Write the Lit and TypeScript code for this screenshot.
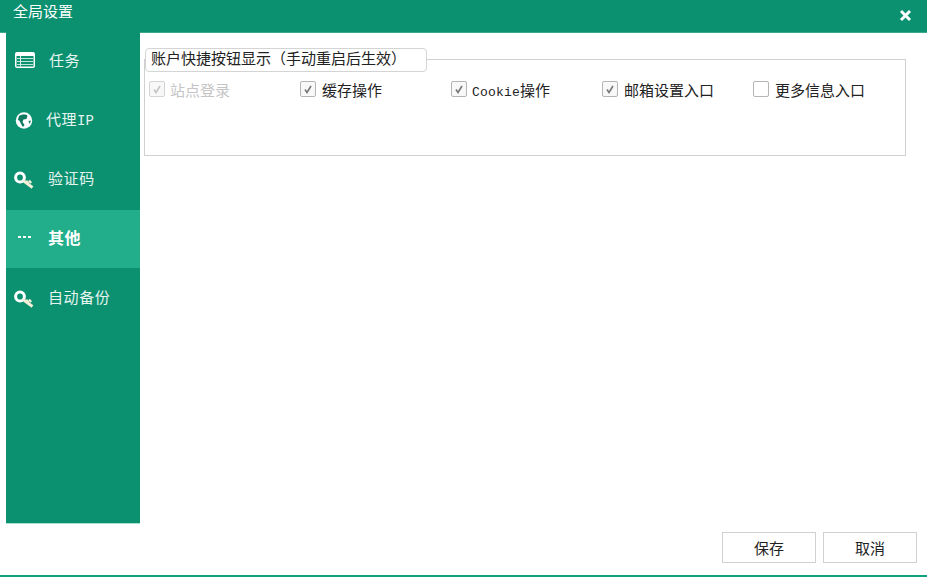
import { LitElement, html, css } from "lit";
import { customElement } from "lit/decorators.js";

const keyIcon = html`<svg class="ic key" width="20" height="18" viewBox="0 0 20 18">
  <ellipse cx="6" cy="6.5" rx="4.4" ry="4.6" fill="none" stroke="#fff" stroke-width="3"/>
  <path d="M9 9.5 L18.5 16.5" stroke="#f3f0d8" stroke-width="2.8" fill="none"/>
  <path d="M15 9.5 L17.2 12 M12.2 9.8 L14.4 12.6" stroke="#f3f0d8" stroke-width="2.2" fill="none"/>
</svg>`;

const check = html`<svg width="12" height="12" viewBox="0 0 12 12"><path d="M3 6.5 L5 9.5 L9 3" fill="none" stroke="currentColor" stroke-width="1.6"/></svg>`;

@customElement("app-root")
export class AppRoot extends LitElement {
  static styles = css`
    :host {
      display: flex;
      flex-direction: column;
      width: 927px;
      height: 577px;
      background: #fff;
      font-family: "Noto Sans CJK SC", "Liberation Sans", sans-serif;
      font-size: 15px;
      color: #222;
      overflow: hidden;
    }
    .title {
      height: 32px;
      flex: none;
      background: #0b9070;
      border-bottom: 1px solid #3aa88a;
      color: #fff;
      display: flex;
      justify-content: space-between;
      font-size: 15px;
      line-height: 22px;
      padding-left: 13px;
      padding-right: 15px;
    }
    .close { margin-top: 9px; }
    .body { flex: 1; display: flex; min-height: 0; padding-left: 6px; }
    .side {
      width: 134px;
      height: 491px;
      margin-top: -1px;
      background: #0b9070;
      border-bottom: 1px solid #a9e0cf;
      flex: none;
      display: flex;
      flex-direction: column;
    }
    .item {
      height: 59.25px;
      flex: none;
      box-sizing: border-box;
      display: flex;
      align-items: center;
      color: #e6f5f0;
      padding-left: 8px;
      gap: 14px;
      letter-spacing: 0.6px;
    }
    .item > span { margin-bottom: 5px; }
    .item.task { gap: 14px; padding-left: 9px; }
    .item.task .ic { margin-bottom: 3px; }
    .item.proxy { gap: 13px; padding-left: 9px; }
    .item.proxy > span { letter-spacing: 0.5px; }
    .item.active {
      background: #23ae8b;
      color: #fff;
      font-weight: 700;
      font-size: 16px;
      height: 58px;
      margin-bottom: 1.25px;
      gap: 16px;
      padding-left: 12px;
    }
    .item.active > span { margin-bottom: 3px; }
    .item.active .ic { margin-bottom: 4px; }
    .item .ic { flex: none; }
    .latin { font-family: "Liberation Mono", monospace; font-size: 13px; letter-spacing: 0.2px; }
    .item .latin { font-size: 14px; letter-spacing: 0; }
    .main { flex: 1; padding: 14px 21px 0 4px; min-width: 0; position: relative; }
    .group {
      position: relative;
      margin-top: 12px;
      height: 97px;
      box-sizing: border-box;
      border: 1px solid #d0d0d0;
      padding: 20px 0 0 4px;
      display: flex;
    }
    .legend {
      position: absolute;
      left: 0;
      top: -12px;
      width: 282px;
      height: 24px;
      box-sizing: border-box;
      background: #fff;
      border: 1px solid #d4d4d4;
      border-radius: 4px;
      padding-left: 5px;
      line-height: 18px;
      color: #222;
      white-space: nowrap;
    }
    .opt {
      width: 151px;
      flex: none;
      display: flex;
      align-items: center;
      gap: 6px;
      height: 18px;
      white-space: nowrap;
    }
    .opt.tight { gap: 5px; }
    .box {
      width: 16px;
      height: 16px;
      box-sizing: border-box;
      border: 1px solid #b5b5b5;
      border-radius: 2px;
      background: #f8f8f8;
      color: #777;
      display: flex;
      align-items: center;
      justify-content: center;
    }
    .box.off { background: #fff; }
    .opt.disabled { color: #c4c4c4; }
    .opt.disabled .box { border-color: #d4d4d4; color: #c4c4c4; }
    .footer {
      flex: none;
      height: 31px;
      display: flex;
      justify-content: flex-end;
      gap: 7px;
      padding: 0 10px 12px 0;
      margin-top: -43px;
    }
    .btn {
      width: 94px;
      height: 31px;
      box-sizing: border-box;
      border: 1px solid #d0d0d0;
      background: #fff;
      font: inherit;
      color: #222;
      padding: 0;
    }
    .bottom { flex: none; height: 2px; background: #10a07c; }
  `;

  render() {
    return html`
      <div class="title">
        <span>全局设置</span>
        <svg class="close" width="13" height="13" viewBox="0 0 13 13"><path d="M2 2 L11 11 M11 2 L2 11" stroke="#fff" stroke-width="3"/></svg>
      </div>
      <div class="body">
        <nav class="side">
          <div class="item task">
            <svg class="ic" width="20" height="16" viewBox="0 0 20 16">
              <rect x="0" y="0" width="20" height="16" rx="2" fill="#fff"/>
              <rect x="1.5" y="4" width="17" height="10.5" fill="#0b9070"/>
              <path d="M2 6.5 H18 M2 9.5 H18 M2 12.5 H18" stroke="#bfe6da" stroke-width="1.2"/>
              <path d="M5.5 4 V14.5" stroke="#d9f0e8" stroke-width="1"/>
            </svg>
            <span>任务</span>
          </div>
          <div class="item proxy">
            <svg class="ic" width="18" height="17" viewBox="0 0 17 17">
              <circle cx="8.5" cy="8.5" r="8.2" fill="#fff"/>
              <path d="M3.5 4 C6 2 10 2 12 3.5 L11 7 L8 7.5 L7 10 L9 13 L7.5 15 C6 13 5 11 4.5 9.5 L2.5 7.5 Z" fill="#0b7a60"/>
              <path d="M13 9 L15.5 8.5 L14 12 Z" fill="#0b7a60"/>
            </svg>
            <span>代理<span class="latin">IP</span></span>
          </div>
          <div class="item">${keyIcon}<span>验证码</span></div>
          <div class="item active">
            <svg class="ic" width="14" height="4" viewBox="0 0 14 4"><path d="M0 1h3v2H0z M5 1h3v2H5z M10 1h3v2h-3z" fill="#fff"/></svg>
            <span>其他</span>
          </div>
          <div class="item">${keyIcon}<span>自动备份</span></div>
        </nav>
        <main class="main">
          <section class="group">
            <div class="legend">账户快捷按钮显示（手动重启后生效）</div>
            <label class="opt disabled tight"><span class="box">${check}</span>站点登录</label>
            <label class="opt"><span class="box">${check}</span>缓存操作</label>
            <label class="opt tight"><span class="box">${check}</span><span><span class="latin">Cookie</span>操作</span></label>
            <label class="opt"><span class="box">${check}</span>邮箱设置入口</label>
            <label class="opt"><span class="box off"></span>更多信息入口</label>
          </section>
        </main>
      </div>
      <div class="footer">
        <button class="btn">保存</button>
        <button class="btn">取消</button>
      </div>
      <div class="bottom"></div>
    `;
  }
}
